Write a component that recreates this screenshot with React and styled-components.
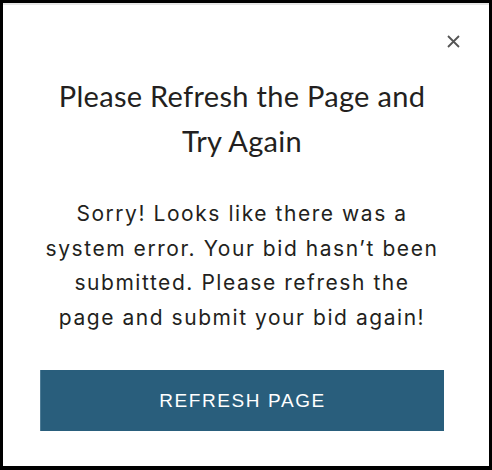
import React from "react";
import styled, { createGlobalStyle } from "styled-components";

const GlobalStyle = createGlobalStyle`
  html, body {
    margin: 0;
    padding: 0;
    background: #000;
  }
  * {
    box-sizing: border-box;
  }
`;

const Frame = styled.div`
  width: 492px;
  height: 470px;
  border-style: solid;
  border-color: #000;
  border-width: 3px 3px 4px 3px;
  background: #fff;
`;

const Modal = styled.div`
  height: 100%;
  display: flex;
  flex-direction: column;
  align-items: center;
  border-top: 2px solid #e6e6e6;
  padding: 0 45px 0 37px;
  color: #231f20;
`;

const Header = styled.div`
  align-self: stretch;
  display: flex;
  justify-content: flex-end;
  padding-top: 29px;
  margin-right: -16px;
`;

const CloseButton = styled.button`
  width: 14px;
  height: 14px;
  padding: 0;
  border: none;
  background: none;
  cursor: pointer;
  display: flex;
  align-items: center;
  justify-content: center;
  color: #555;
`;

const Title = styled.h2`
  margin: 25px 0 0;
  font-family: Lato, "Open Sans", sans-serif;
  font-weight: 400;
  font-size: 29px;
  line-height: 45px;
  text-align: center;
  letter-spacing: 0.3px;
`;

const Message = styled.p`
  margin: 34px 0 0;
  font-family: Inter, "Liberation Sans", sans-serif;
  font-size: 21px;
  line-height: 34.5px;
  text-align: center;
  letter-spacing: 1.55px;
`;

const RefreshButton = styled.button`
  margin-top: 35px;
  align-self: stretch;
  height: 61px;
  border: none;
  border-left: 1px solid #4d7b95;
  background: #295e7c;
  color: #fff;
  font-family: "Liberation Sans", Arial, sans-serif;
  font-size: 19px;
  letter-spacing: 1.6px;
  text-transform: uppercase;
  cursor: pointer;
`;

const CloseIcon = () => (
  <svg width="13" height="13" viewBox="0 0 13 13" fill="none">
    <path d="M1 1L12 12M12 1L1 12" stroke="currentColor" strokeWidth="1.8" />
  </svg>
);

export default function App() {
  return (
    <>
      <GlobalStyle />
      <Frame>
        <Modal>
          <Header>
            <CloseButton aria-label="Close">
              <CloseIcon />
            </CloseButton>
          </Header>
          <Title>
            Please Refresh the Page and
            <br />
            Try Again
          </Title>
          <Message>
            Sorry! Looks like there was a
            <br />
            system error. Your bid hasn’t been
            <br />
            submitted. Please refresh the
            <br />
            page and submit your bid again!
          </Message>
          <RefreshButton>Refresh Page</RefreshButton>
        </Modal>
      </Frame>
    </>
  );
}
